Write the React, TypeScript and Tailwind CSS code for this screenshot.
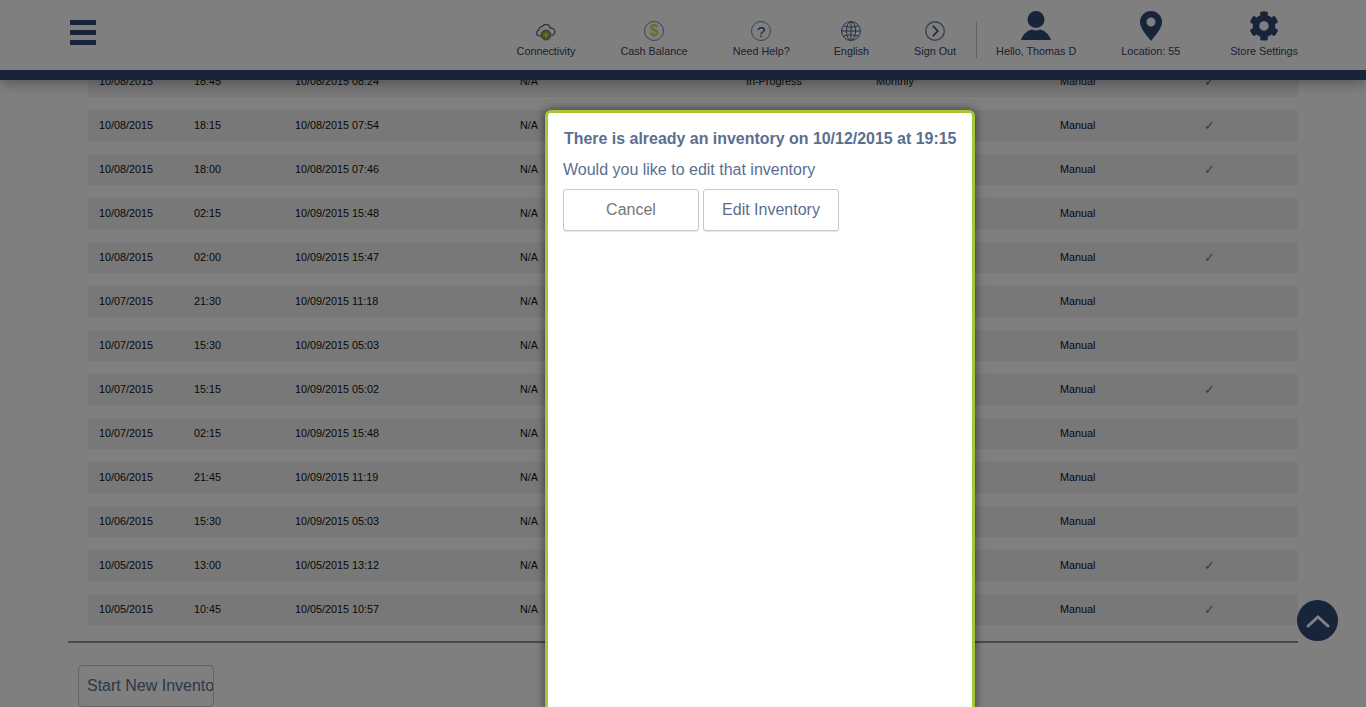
import { FaCog } from 'react-icons/fa';
import type { ReactNode } from 'react';

type InventoryRow = {
  date: string;
  time: string;
  created: string;
  status?: string;
  kind?: string;
  checked?: boolean;
};

const rows: InventoryRow[] = [
  { date: '10/08/2015', time: '18:45', created: '10/08/2015 08:24', status: 'In-Progress', kind: 'Monthly', checked: true },
  { date: '10/08/2015', time: '18:15', created: '10/08/2015 07:54', checked: true },
  { date: '10/08/2015', time: '18:00', created: '10/08/2015 07:46', checked: true },
  { date: '10/08/2015', time: '02:15', created: '10/09/2015 15:48' },
  { date: '10/08/2015', time: '02:00', created: '10/09/2015 15:47', checked: true },
  { date: '10/07/2015', time: '21:30', created: '10/09/2015 11:18' },
  { date: '10/07/2015', time: '15:30', created: '10/09/2015 05:03' },
  { date: '10/07/2015', time: '15:15', created: '10/09/2015 05:02', checked: true },
  { date: '10/07/2015', time: '02:15', created: '10/09/2015 15:48' },
  { date: '10/06/2015', time: '21:45', created: '10/09/2015 11:19' },
  { date: '10/06/2015', time: '15:30', created: '10/09/2015 05:03' },
  { date: '10/05/2015', time: '13:00', created: '10/05/2015 13:12', checked: true },
  { date: '10/05/2015', time: '10:45', created: '10/05/2015 10:57', checked: true },
];

function NavItem({ label, icon, className = '' }: { label: string; icon: ReactNode; className?: string }) {
  return (
    <div className={`flex flex-col items-center whitespace-nowrap ${className}`}>
      <div className="flex h-[30px] items-end justify-center">{icon}</div>
      <span className="mt-[3px] text-[10.8px] leading-[14px] text-[#33435f]">{label}</span>
    </div>
  );
}

function CloudIcon() {
  return (
    <svg width="20" height="20" viewBox="0 0 20 20" fill="none">
      <path
        d="M5 15H3.600a3.100 3.100 0 0 1-.5-6.100A3.700 3.700 0 0 1 6.500 5.300a4.300 4.300 0 0 1 7.800 1.900 3.400 3.400 0 0 1 1.700 7.200"
        stroke="#4b6188"
        strokeWidth="1.2"
        strokeLinecap="round"
      />
      <circle cx="10" cy="14" r="5" fill="#8fb02f" stroke="#4b6188" strokeWidth="0.8" />
      <path d="M10 11.500v5M7.500 14h5" stroke="#e8f0d0" strokeWidth="1.100" />
    </svg>
  );
}

function CashIcon() {
  return (
    <div className="flex h-5 w-5 items-center justify-center rounded-full border-[1.5px] border-[#6f83a6] text-[16px] font-bold leading-none text-[#c8e050]">
      $
    </div>
  );
}

function HelpIcon() {
  return (
    <div className="flex h-5 w-5 items-center justify-center rounded-full border-[1.5px] border-[#6f83a6] text-[15px] leading-none text-[#2e4874]">
      ?
    </div>
  );
}

function GlobeIcon() {
  return (
    <svg width="20" height="20" viewBox="0 0 20 20" fill="none" stroke="#4b6188" strokeWidth="1">
      <circle cx="10" cy="10" r="9.400" />
      <ellipse cx="10" cy="10" rx="4.600" ry="9.400" />
      <path d="M10 .6v18.800M.6 10h18.800M2.400 4.800c4 1.800 11.200 1.800 15.200 0M2.400 15.200c4-1.800 11.200-1.800 15.200 0" />
    </svg>
  );
}

function SignOutIcon() {
  return (
    <svg width="20" height="20" viewBox="0 0 20 20" fill="none">
      <circle cx="10" cy="10" r="9.300" stroke="#6f83a6" strokeWidth="1.400" />
      <path d="M7.800 4.800 12.800 10l-5 5.200" stroke="#2e4874" strokeWidth="1.600" />
    </svg>
  );
}

function UserIcon() {
  return (
    <svg width="30" height="30" viewBox="0 0 30 30" fill="#2e4874">
      <circle cx="15" cy="8.500" r="8.500" />
      <path d="M0 29C2 22.500 7.500 19 11 18.500c2.500 1.300 5.500 1.300 8 0C22.500 19 28 22.500 30 29Z" />
    </svg>
  );
}

function PinIcon() {
  return (
    <svg width="22" height="30" viewBox="0 0 22 30" fill="#2e4874">
      <path
        fillRule="evenodd"
        d="M11 0a11 11 0 0 1 11 11c0 6.500-7 14-11 19C7 25 0 17.500 0 11A11 11 0 0 1 11 0Zm0 6.500a4.500 4.500 0 1 0 0 9 4.500 4.500 0 0 0 0-9Z"
      />
    </svg>
  );
}

function TableRow({ row }: { row: InventoryRow }) {
  return (
    <div className="grid h-[31px] grid-cols-[95px_101px_225px_226px_130px_184px_144px_1fr] items-center bg-[#f0f0f0] pl-[11px] text-[10.8px] text-[#111]">
      <span>{row.date}</span>
      <span>{row.time}</span>
      <span>{row.created}</span>
      <span>N/A</span>
      <span>{row.status}</span>
      <span>{row.kind}</span>
      <span>Manual</span>
      <span className="text-[13px] text-[#777]">{row.checked ? '✓' : ''}</span>
    </div>
  );
}

export default function App() {
  return (
    <div className="relative h-[707px] w-full overflow-hidden bg-white font-['Liberation_Sans',Arial,sans-serif]">
      <header className="relative z-10 flex h-[80px] items-start justify-between border-b-[10px] border-[#2e4874] bg-white pr-[68px] shadow-[0_4px_12px_rgba(0,0,0,0.3)]">
        <div className="ml-[70px] mt-[20px] flex w-[26px] flex-col gap-[5px]">
          <div className="h-[5px] bg-[#2e4874]" />
          <div className="h-[5px] bg-[#2e4874]" />
          <div className="h-[5px] bg-[#2e4874]" />
        </div>
        <nav className="mt-[11px] flex items-start">
          <NavItem label="Connectivity" icon={<CloudIcon />} />
          <NavItem label="Cash Balance" icon={<CashIcon />} className="ml-[45px]" />
          <NavItem label="Need Help?" icon={<HelpIcon />} className="ml-[45px]" />
          <NavItem label="English" icon={<GlobeIcon />} className="ml-[44px]" />
          <NavItem label="Sign Out" icon={<SignOutIcon />} className="ml-[45px]" />
          <div className="ml-[20px] mr-[19px] mt-[10px] h-[37px] w-px bg-[#c4c4c4]" />
          <NavItem label="Hello, Thomas D" icon={<UserIcon />} />
          <NavItem label="Location: 55" icon={<PinIcon />} className="ml-[45px]" />
          <NavItem label="Store Settings" icon={<FaCog size={30} color="#2e4874" />} className="ml-[50px]" />
        </nav>
      </header>

      <main className="pl-[68px] pr-[68px]">
        <div className="-mt-[14px] flex flex-col gap-[13px] pl-[20px]">
          {rows.map((row, index) => (
            <TableRow key={index} row={row} />
          ))}
        </div>
        <div className="mt-[16px] h-[2px] bg-[#8d93a6]" />
        <button className="ml-[10px] mt-[22px] h-[42px] w-[136px] overflow-hidden whitespace-nowrap rounded-[4px] border border-[#c8c8c8] bg-white pl-[8px] text-left text-[16px] text-[#5a6f8f]">
          Start New Inventory
        </button>
      </main>

      <div className="absolute inset-0 z-20 bg-black/50" />

      <button className="absolute left-[1297px] top-[600px] z-20 flex h-[41px] w-[41px] items-center justify-center rounded-full bg-[#17243a]">
        <svg width="24" height="14" viewBox="0 0 24 14" fill="none" stroke="#7f8287" strokeWidth="3" strokeLinecap="round">
          <path d="M2 12 12 3l10 9" />
        </svg>
      </button>

      <div className="absolute left-[545px] top-[110px] z-30 h-[640px] w-[430px] rounded-[6px] border-[3px] border-[#a4c639] bg-white pl-[15px] pt-[15px] text-[#5a6f8f] shadow-[0_0_10px_rgba(0,0,0,0.6)]">
        <h2 className="pl-[1px] text-[15.95px] font-bold leading-[22px]">There is already an inventory on 10/12/2015 at 19:15</h2>
        <p className="mt-[9px] text-[16px] leading-[22px]">Would you like to edit that inventory</p>
        <div className="mt-[8px] flex gap-[4px]">
          <button className="h-[42px] w-[136px] rounded-[3px] border border-[#c8c8c8] bg-white text-[16px] text-[#777] shadow-[0_1px_1px_rgba(0,0,0,0.1)]">
            Cancel
          </button>
          <button className="h-[42px] w-[136px] rounded-[3px] border border-[#c8c8c8] bg-white text-[16px] text-[#5a6f8f] shadow-[0_1px_1px_rgba(0,0,0,0.1)]">
            Edit Inventory
          </button>
        </div>
      </div>
    </div>
  );
}
